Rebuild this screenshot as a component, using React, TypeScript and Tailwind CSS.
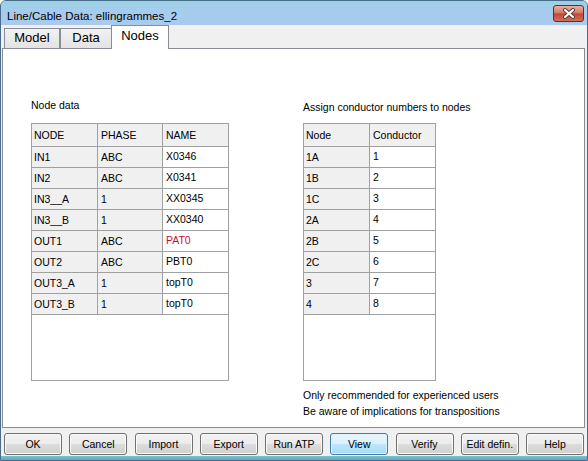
import React from 'react';

const nodeRows: [string, string, string][] = [
  ['IN1', 'ABC', 'X0346'],
  ['IN2', 'ABC', 'X0341'],
  ['IN3__A', '1', 'XX0345'],
  ['IN3__B', '1', 'XX0340'],
  ['OUT1', 'ABC', 'PAT0'],
  ['OUT2', 'ABC', 'PBT0'],
  ['OUT3_A', '1', 'topT0'],
  ['OUT3_B', '1', 'topT0'],
];

const conductorRows: [string, string][] = [
  ['1A', '1'],
  ['1B', '2'],
  ['1C', '3'],
  ['2A', '4'],
  ['2B', '5'],
  ['2C', '6'],
  ['3', '7'],
  ['4', '8'],
];

const buttons = ['OK', 'Cancel', 'Import', 'Export', 'Run ATP', 'View', 'Verify', 'Edit defin.', 'Help'];

function CloseButton() {
  return (
    <div className="flex h-[17px] w-[31px] items-center justify-center rounded-[3px] border border-[#6a2a24] bg-[linear-gradient(#eab0a4_0%,#d97a68_45%,#c24a33_52%,#d0705a_100%)]">
      <svg width="14" height="11" viewBox="0 0 14 11">
        <path d="M3 2 L11 9 M11 2 L3 9" stroke="#5a3a36" strokeWidth="4" strokeLinecap="round" />
        <path d="M3 2 L11 9 M11 2 L3 9" stroke="#ffffff" strokeWidth="2.2" strokeLinecap="round" />
      </svg>
    </div>
  );
}

function Tab({ label, active }: { label: string; active?: boolean }) {
  if (active) {
    return (
      <div className="relative z-10 -mb-px -ml-px flex h-[24px] w-[58px] justify-center border border-b-0 border-[#898c95] bg-white pt-[2px] text-[13px] leading-[15px]">
        {label}
      </div>
    );
  }
  return (
    <div className="flex h-[20px] justify-center border border-b-0 border-[#898c95] bg-[linear-gradient(#f2f2f2,#e3e3e3)] pt-[1px] text-[13px] leading-[15px]">
      {label}
    </div>
  );
}

function NodeTable() {
  return (
    <div className="flex h-[258px] w-[198px] flex-col border border-[#a0a0a0] bg-white">
      <div className="flex h-[23px] border-b border-[#a0a0a0] bg-[#f0f0f0]">
        <div className="flex w-[66px] items-center border-r border-[#a0a0a0] pl-[2px]">NODE</div>
        <div className="flex w-[65px] items-center border-r border-[#a0a0a0] pl-[3px]">PHASE</div>
        <div className="flex flex-1 items-center pl-[3px]">NAME</div>
      </div>
      {nodeRows.map(([node, phase, name]) => (
        <div key={node} className="flex h-[21px] border-b border-[#a0a0a0]">
          <div className="flex w-[66px] items-center border-r border-[#a0a0a0] bg-[#f0f0f0] pl-[2px]">{node}</div>
          <div className="flex w-[65px] items-center border-r border-[#a0a0a0] bg-[#f0f0f0] pl-[3px]">{phase}</div>
          <div className={`flex flex-1 items-center pb-[2px] pl-[3px] ${name === 'PAT0' ? 'text-[#c8102e]' : ''}`}>{name}</div>
        </div>
      ))}
    </div>
  );
}

function ConductorTable() {
  return (
    <div className="flex h-[258px] w-[133px] flex-col border border-[#a0a0a0] bg-white">
      <div className="flex h-[23px] border-b border-[#a0a0a0] bg-[#f0f0f0]">
        <div className="flex w-[66px] items-center border-r border-[#a0a0a0] pl-[2px]">Node</div>
        <div className="flex flex-1 items-center pl-[3px]">Conductor</div>
      </div>
      {conductorRows.map(([node, cond]) => (
        <div key={node} className="flex h-[21px] border-b border-[#a0a0a0]">
          <div className="flex w-[66px] items-center border-r border-[#a0a0a0] bg-[#f0f0f0] pl-[2px]">{node}</div>
          <div className="flex flex-1 items-center pb-[2px] pl-[3px]">{cond}</div>
        </div>
      ))}
    </div>
  );
}

export default function App() {
  return (
    <div className="flex h-[461px] w-[588px] flex-col overflow-hidden rounded-t-[6px] border border-[#4a6c8c] bg-[#a9cbee] font-['Liberation_Sans',Arial,sans-serif] text-[10.5px] leading-[13px] text-black">
      {/* title bar */}
      <div className="flex h-[24px] shrink-0 items-start justify-between bg-[linear-gradient(#98d3dc_0%,#a4cdec_25%,#a8caef_100%)] pl-[6px] pr-[3px]">
        <div className="pt-[8px] text-[11.5px] leading-[14px]">Line/Cable Data: ellingrammes_2</div>
        <div className="pt-[4px]">
          <CloseButton />
        </div>
      </div>

      {/* client */}
      <div className="flex flex-1 flex-col bg-[#f0f0f0] pb-[1px]">
        <div className="flex h-[23px] items-end pl-[3px]">
          <div className="w-[56px]">
            <Tab label="Model" />
          </div>
          <div className="w-[52px]">
            <Tab label="Data" />
          </div>
          <Tab label="Nodes" active />
        </div>

        <div className="ml-[1px] mr-[2px] flex h-[380px] shrink-0 gap-[74px] border border-[#898c95] bg-white pl-[28px] pt-[50px]">
          <div className="flex flex-col">
            <div className="h-[13px]">Node data</div>
            <div className="mt-[11px]">
              <NodeTable />
            </div>
          </div>
          <div className="flex flex-col pt-[2px]">
            <div className="h-[13px]">Assign conductor numbers to nodes</div>
            <div className="mt-[9px]">
              <ConductorTable />
            </div>
            <div className="mt-[6px] leading-[16px]">
              <div>Only recommended for experienced users</div>
              <div>Be aware of implications for transpositions</div>
            </div>
          </div>
        </div>

        <div className="mt-[5px] flex justify-between px-[3px]">
          {buttons.map((b) => (
            <div
              key={b}
              className={
                b === 'View'
                  ? 'flex h-[22px] w-[58px] items-center justify-center rounded-[3px] border border-[#3c7fb1] bg-[linear-gradient(#eaf6fd_0%,#d9f0fc_50%,#bee6fd_51%,#a7d9f5_100%)] shadow-[inset_0_0_0_1px_#dff2fd]'
                  : 'flex h-[22px] w-[58px] items-center justify-center rounded-[3px] border border-[#707070] bg-[linear-gradient(#f2f2f2_0%,#ebebeb_50%,#dddddd_51%,#cfcfcf_100%)] shadow-[inset_0_0_0_1px_#fbfbfb]'
              }
            >
              {b}
            </div>
          ))}
        </div>
      </div>

      {/* bottom frame */}
      <div className="h-[4px] shrink-0 bg-[linear-gradient(#7fc1cc,#5ea9b8)]" />
    </div>
  );
}
